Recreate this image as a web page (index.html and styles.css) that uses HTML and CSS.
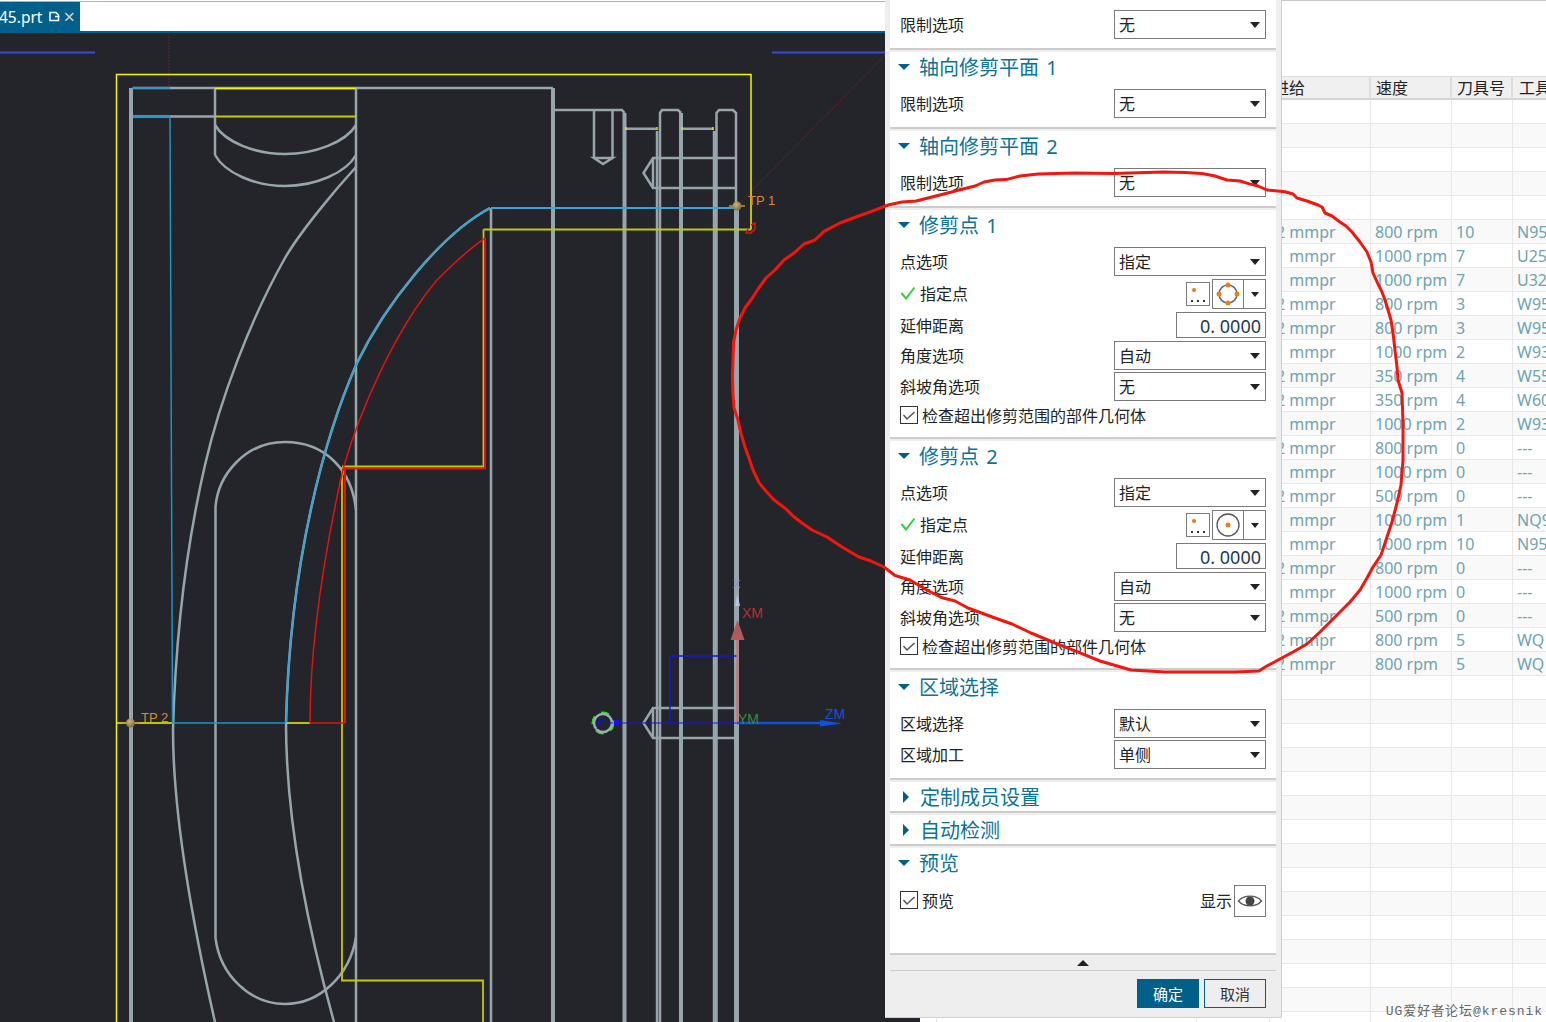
FILE: index.html
```html
<!DOCTYPE html>
<html lang="zh-CN">

<head>
    <meta charset="UTF-8">
    <title>修剪点</title>
    <link rel="stylesheet" href="styles.css">
</head>

<body>
    <div class="page">
        <div class="workspace">
            <div class="tabbar">
                <div class="tab">
                    <span class="tab-name">45.prt</span>
                    <svg class="tab-icon" width="11" height="11" viewBox="0 0 11 11">
                        <path d="M1 1.500H7L9.500 4V9.500H1Z M6 5.500H10.500" fill="none" stroke="#fff" stroke-width="1.500" />
                    </svg>
                    <span class="tab-close">×</span>
                </div>
            </div>
            <div class="canvas">
                <svg class="drawing" width="920" height="989" viewBox="0 33 920 989">
                    <defs>
                        <radialGradient id="ball" cx="40%" cy="35%" r="70%">
                            <stop offset="0" stop-color="#cdb87a" />
                            <stop offset="1" stop-color="#75663a" />
                        </radialGradient>
                    </defs>

                    <!-- 顶部蓝线 / 虚线 -->
                    <path class="top-line" d="M0 52.500H95 M772 52.500H885" />
                    <path class="dash" d="M169 33V88 M737 206L885 55" />

                    <!-- 零件轮廓 -->
                    <g class="part">
                        <path d="M215 88V155 M356 88V1022 M491 208V1022" />
                        <path d="M131 116.500H215 M133 88H553" />
                        <path d="M215 125C225 142 255 154 285 154C315 154 346 142 356 125" />
                        <path d="M215 155C225 173 255 186 285 186C315 186 346 173 356 155" />
                        <path d="M356 167C335 190 300 232 285 258C250 320 220 400 205 465C190 530 176 620 173 730C173 800 185 890 215 1022" />
                        <path d="M215.500 938V507C218 475 245 442 285 442C325 442 352 470 356 510" />
                        <path d="M215.500 938C220 975 250 1004 285 1004C320 1004 350 975 356 937" />
                        <path d="M490 208C440 235 385 305 357 363C325 435 290 560 286 723C286 800 300 900 334 1022" />
                        <path d="M553 110H622L624.500 113 M657 131V1022 M660 1022V113L662 110H678L681 113 M714 131V1022 M716.500 1022V113L719 110H733L736 113V206" />
                        <path d="M626 128.700H656 M683 128.700H713" />
                        <path d="M594 110V158 M612.500 110V158 M594 158H612.500L603 164Z" />
                        <path d="M736 158H653L643.500 173L653 188H736 M653 158V188" />
                        <path d="M736 708H653L643.500 723L653 738H736 M653 708V738" />
                    </g>
                    <path class="thick" d="M131 88V1022 M553 88V1022 M624.500 113V1022 M681 113V1022" />
                    <path class="thick-end" d="M736.500 206V1022" />

                    <!-- 黄色边界 -->
                    <g class="boundary">
                        <path d="M116.500 1022V74.500H751V229.500" />
                        <path d="M215 88.500H356" />
                        <path class="olive" d="M215 116.500H356 M483.500 229.500H751 M483.500 229.500V466.500H342 M342 467V980.500H483V1022" />
                        <path d="M116.500 723H173 M286 723H310" />
                        <path class="tick" d="M626 127V130 M657 127V130 M682 127V130 M713 127V130" />
                    </g>

                    <!-- 蓝色刀轨 -->
                    <g class="toolpath">
                        <path d="M132 88H170 M133 116.500H170 M170 117L172.500 723H286" />
                        <path class="toolpath-wide" d="M491 208H737" />
                        <path class="toolpath-wide" d="M490 208C440 235 385 305 357 363C325 435 290 560 286 723" />
                    </g>

                    <!-- 红色边界 -->
                    <g class="limit">
                        <path d="M310 723C310 640 325 550 343 469C360 410 395 330 437 280C455 262 470 248 485.500 238" />
                        <path d="M310 723H345" />
                        <path class="limit-wide" d="M345 723V468.500H485V238" />
                        <path d="M751 225L755 223V229L751 233H746L748 229" />
                    </g>

                    <!-- 修剪点 -->
                    <path class="pin-arm" d="M729 206H745 M122 723H139" />
                    <circle cx="737" cy="206" r="4.500" fill="url(#ball)" />
                    <circle cx="130.500" cy="723" r="4.500" fill="url(#ball)" />
                    <text class="pin-label" x="748" y="205">TP 1</text>
                    <text class="pin-label" x="141" y="722">TP 2</text>

                    <!-- 坐标系 -->
                    <path class="axis-rect" d="M670 723V656H737" />
                    <path class="axis-thin" d="M611 723H737" />
                    <path class="axis-x" d="M737.500 640V723" />
                    <polygon class="axis-x-head" points="737.500,620 730.500,640 744.500,640" />
                    <polygon class="axis-small" points="737.500,594 735,606 740,606" />
                    <path class="axis-z" d="M737 723H820" />
                    <polygon class="axis-z-head" points="820,720 842,723.500 820,726.500" />
                    <text class="axis-mark" x="733" y="588">X</text>
                    <text class="label-xm" x="742" y="618">XM</text>
                    <text class="label-ym" x="738" y="724">YM</text>
                    <text class="label-zm" x="825" y="719">ZM</text>

                    <circle class="origin-green" cx="603" cy="723" r="10" />
                    <circle class="origin-ring" cx="603" cy="723" r="9" />
                    <path class="origin-y" d="M598 719L599 724L597 729 M603 720L599 724 M607 723H613" />
                    <rect class="origin-box" x="614" y="720" width="5" height="6" />
                </svg>
            </div>
        </div>

        <div class="sheet">
            <table class="op-table">
                <colgroup>
                    <col class="c1"><col class="c2"><col class="c3"><col class="c4"><col class="c5"><col class="c6">
                </colgroup>
                <thead>
                    <tr><th></th><th></th><th></th><th class="feed-head">进给</th><th>速度</th><th>刀具号</th><th>工具</th></tr>
                </thead>
                <tbody>
                    <tr><td></td><td></td><td></td><td></td><td></td><td></td><td></td></tr>
                    <tr><td></td><td></td><td></td><td></td><td></td><td></td><td></td></tr>
                    <tr><td></td><td></td><td></td><td></td><td></td><td></td><td></td></tr>
                    <tr><td></td><td></td><td></td><td></td><td></td><td></td><td></td></tr>
                    <tr><td></td><td></td><td></td><td></td><td></td><td></td><td></td></tr>
                    <tr><td></td><td></td><td></td><td>2 mmpr</td><td>800 rpm</td><td>10</td><td>N95</td></tr>
                    <tr><td></td><td></td><td></td><td>1 mmpr</td><td>1000 rpm</td><td>7</td><td>U25</td></tr>
                    <tr><td></td><td></td><td></td><td>1 mmpr</td><td>1000 rpm</td><td>7</td><td>U32</td></tr>
                    <tr><td></td><td></td><td></td><td>2 mmpr</td><td>800 rpm</td><td>3</td><td>W95</td></tr>
                    <tr><td></td><td></td><td></td><td>2 mmpr</td><td>800 rpm</td><td>3</td><td>W95</td></tr>
                    <tr><td></td><td></td><td></td><td>1 mmpr</td><td>1000 rpm</td><td>2</td><td>W93</td></tr>
                    <tr><td></td><td></td><td></td><td>2 mmpr</td><td>350 rpm</td><td>4</td><td>W55</td></tr>
                    <tr><td></td><td></td><td></td><td>2 mmpr</td><td>350 rpm</td><td>4</td><td>W60</td></tr>
                    <tr><td></td><td></td><td></td><td>1 mmpr</td><td>1000 rpm</td><td>2</td><td>W93</td></tr>
                    <tr><td></td><td></td><td></td><td>2 mmpr</td><td>800 rpm</td><td>0</td><td>---</td></tr>
                    <tr><td></td><td></td><td></td><td>1 mmpr</td><td>1000 rpm</td><td>0</td><td>---</td></tr>
                    <tr><td></td><td></td><td></td><td>2 mmpr</td><td>500 rpm</td><td>0</td><td>---</td></tr>
                    <tr><td></td><td></td><td></td><td>1 mmpr</td><td>1000 rpm</td><td>1</td><td>NQ9</td></tr>
                    <tr><td></td><td></td><td></td><td>1 mmpr</td><td>1000 rpm</td><td>10</td><td>N95</td></tr>
                    <tr><td></td><td></td><td></td><td>2 mmpr</td><td>800 rpm</td><td>0</td><td>---</td></tr>
                    <tr><td></td><td></td><td></td><td>1 mmpr</td><td>1000 rpm</td><td>0</td><td>---</td></tr>
                    <tr><td></td><td></td><td></td><td>2 mmpr</td><td>500 rpm</td><td>0</td><td>---</td></tr>
                    <tr><td></td><td></td><td></td><td>2 mmpr</td><td>800 rpm</td><td>5</td><td>WQ</td></tr>
                    <tr><td></td><td></td><td></td><td>2 mmpr</td><td>800 rpm</td><td>5</td><td>WQ</td></tr>
                    <tr><td></td><td></td><td></td><td></td><td></td><td></td><td></td></tr>
                    <tr><td></td><td></td><td></td><td></td><td></td><td></td><td></td></tr>
                    <tr><td></td><td></td><td></td><td></td><td></td><td></td><td></td></tr>
                    <tr><td></td><td></td><td></td><td></td><td></td><td></td><td></td></tr>
                    <tr><td></td><td></td><td></td><td></td><td></td><td></td><td></td></tr>
                    <tr><td></td><td></td><td></td><td></td><td></td><td></td><td></td></tr>
                    <tr><td></td><td></td><td></td><td></td><td></td><td></td><td></td></tr>
                    <tr><td></td><td></td><td></td><td></td><td></td><td></td><td></td></tr>
                    <tr><td></td><td></td><td></td><td></td><td></td><td></td><td></td></tr>
                    <tr><td></td><td></td><td></td><td></td><td></td><td></td><td></td></tr>
                    <tr><td></td><td></td><td></td><td></td><td></td><td></td><td></td></tr>
                    <tr><td></td><td></td><td></td><td></td><td></td><td></td><td></td></tr>
                    <tr><td></td><td></td><td></td><td></td><td></td><td></td><td></td></tr>
                    <tr><td></td><td></td><td></td><td></td><td></td><td></td><td></td></tr>
                    <tr><td></td><td></td><td></td><td></td><td></td><td></td><td></td></tr>
                </tbody>
            </table>
        </div>

        <!-- 对话框 -->
        <div class="dialog">
            <div class="section section-first">
                <div class="form-row">
                    <span>限制选项</span>
                    <div class="select">无<i class="arrow"></i></div>
                </div>
            </div>

            <div class="section">
                <div class="section-head"><i class="caret"></i><span class="section-title">轴向修剪平面 1</span></div>
                <div class="form-row">
                    <span>限制选项</span>
                    <div class="select">无<i class="arrow"></i></div>
                </div>
            </div>

            <div class="section">
                <div class="section-head"><i class="caret"></i><span class="section-title">轴向修剪平面 2</span></div>
                <div class="form-row">
                    <span>限制选项</span>
                    <div class="select">无<i class="arrow"></i></div>
                </div>
            </div>

            <div class="section section-trim">
                <div class="section-head"><i class="caret"></i><span class="section-title">修剪点 1</span></div>
                <div class="form-row">
                    <span>点选项</span>
                    <div class="select">指定<i class="arrow"></i></div>
                </div>
                <div class="form-row pick-row">
                    <span class="pick-label">
                        <svg width="16" height="14" viewBox="0 0 16 14"><path d="M1.500 7L6 12.500L14.500 1.500" fill="none" stroke="#2fd13f" stroke-width="2" /></svg>
                        指定点
                    </span>
                    <div class="pick-tools">
                        <div class="dots-btn">
                            <svg width="22" height="22" viewBox="0 0 22 22">
                                <circle cx="7" cy="7" r="2" fill="#e07b1a" />
                                <path d="M4 18H6 M10 18H12 M16 18H18" stroke="#333" stroke-width="2" />
                            </svg>
                        </div>
                        <div class="split-btn">
                            <div class="split-main">
                                <svg width="26" height="26" viewBox="0 0 26 26">
                                    <circle cx="13" cy="13" r="9" fill="none" stroke="#666" stroke-width="1.500" />
                                    <circle cx="13" cy="4" r="2.500" fill="#e8801f" />
                                    <circle cx="13" cy="22" r="2.500" fill="#e8801f" />
                                    <circle cx="4" cy="13" r="2.500" fill="#e8801f" />
                                    <circle cx="22" cy="13" r="2.500" fill="#e8801f" />
                                </svg>
                            </div>
                            <div class="split-drop"><i class="arrow arrow-small"></i></div>
                        </div>
                    </div>
                </div>
                <div class="form-row number-row">
                    <span>延伸距离</span>
                    <div class="number-input">0. 0000</div>
                </div>
                <div class="form-row">
                    <span>角度选项</span>
                    <div class="select">自动<i class="arrow"></i></div>
                </div>
                <div class="form-row">
                    <span>斜坡角选项</span>
                    <div class="select">无<i class="arrow"></i></div>
                </div>
                <div class="check-row">
                    <span class="checkbox">
                        <svg width="14" height="12" viewBox="0 0 14 12"><path d="M1.500 6L5 10L12.500 3" fill="none" stroke="#555" stroke-width="1.500" /></svg>
                    </span>
                    检查超出修剪范围的部件几何体
                </div>
            </div>

            <div class="section section-trim">
                <div class="section-head"><i class="caret"></i><span class="section-title">修剪点 2</span></div>
                <div class="form-row">
                    <span>点选项</span>
                    <div class="select">指定<i class="arrow"></i></div>
                </div>
                <div class="form-row pick-row">
                    <span class="pick-label">
                        <svg width="16" height="14" viewBox="0 0 16 14"><path d="M1.500 7L6 12.500L14.500 1.500" fill="none" stroke="#2fd13f" stroke-width="2" /></svg>
                        指定点
                    </span>
                    <div class="pick-tools">
                        <div class="dots-btn">
                            <svg width="22" height="22" viewBox="0 0 22 22">
                                <circle cx="7" cy="7" r="2" fill="#e07b1a" />
                                <path d="M4 18H6 M10 18H12 M16 18H18" stroke="#333" stroke-width="2" />
                            </svg>
                        </div>
                        <div class="split-btn">
                            <div class="split-main">
                                <svg width="26" height="26" viewBox="0 0 26 26">
                                    <circle cx="13" cy="13" r="11" fill="none" stroke="#555" stroke-width="1.300" />
                                    <circle cx="13" cy="13" r="2.500" fill="#e8801f" />
                                </svg>
                            </div>
                            <div class="split-drop"><i class="arrow arrow-small"></i></div>
                        </div>
                    </div>
                </div>
                <div class="form-row number-row">
                    <span>延伸距离</span>
                    <div class="number-input">0. 0000</div>
                </div>
                <div class="form-row">
                    <span>角度选项</span>
                    <div class="select">自动<i class="arrow"></i></div>
                </div>
                <div class="form-row">
                    <span>斜坡角选项</span>
                    <div class="select">无<i class="arrow"></i></div>
                </div>
                <div class="check-row">
                    <span class="checkbox">
                        <svg width="14" height="12" viewBox="0 0 14 12"><path d="M1.500 6L5 10L12.500 3" fill="none" stroke="#555" stroke-width="1.500" /></svg>
                    </span>
                    检查超出修剪范围的部件几何体
                </div>
            </div>

            <div class="section">
                <div class="section-head"><i class="caret"></i><span class="section-title">区域选择</span></div>
                <div class="form-row">
                    <span>区域选择</span>
                    <div class="select">默认<i class="arrow"></i></div>
                </div>
                <div class="form-row">
                    <span>区域加工</span>
                    <div class="select">单侧<i class="arrow"></i></div>
                </div>
            </div>

            <div class="section section-closed">
                <div class="section-head"><i class="caret caret-right"></i><span class="section-title">定制成员设置</span></div>
            </div>
            <div class="section section-closed">
                <div class="section-head"><i class="caret caret-right"></i><span class="section-title">自动检测</span></div>
            </div>

            <div class="section section-preview">
                <div class="section-head"><i class="caret"></i><span class="section-title">预览</span></div>
                <div class="preview-row">
                    <div class="check-row">
                        <span class="checkbox">
                            <svg width="14" height="12" viewBox="0 0 14 12"><path d="M1.500 6L5 10L12.500 3" fill="none" stroke="#555" stroke-width="1.500" /></svg>
                        </span>
                        预览
                    </div>
                    <div class="show-group">
                        <span class="show-label">显示</span>
                        <div class="eye-btn">
                            <svg width="26" height="18" viewBox="0 0 26 18">
                                <path d="M1.500 9C7 2.500 19 2.500 24.500 9C19 15.500 7 15.500 1.500 9Z" fill="none" stroke="#555" stroke-width="1.300" />
                                <circle cx="13" cy="9" r="4.500" fill="#444" />
                            </svg>
                        </div>
                    </div>
                </div>
            </div>

            <div class="expander"><i class="arrow-up"></i></div>
            <div class="dialog-foot">
                <button class="btn btn-ok">确定</button>
                <button class="btn btn-cancel">取消</button>
            </div>
        </div>

        <!-- 手绘红圈 -->
        <svg class="markup" width="1546" height="1022" viewBox="0 0 1546 1022">
            <polyline points="888,205 873.600,210.700 856,217 840,223 823.600,231.600 815,240 804,244 794,253 784,260 775,270 766,278 758,289 752,298.500 745,308 739.600,319 736,330 733.600,342.400 732.500,376 733,395 734,408 738,420 741,433.600 745,447 748.600,457 753,470 759,482.600 765,490 773.600,499.500 786,509 793,516 802,523 812,530 827,537 842,547 859,557 871,561 884,567 895,575.500 910,580 925,589 941.400,597.500 955,601 968,608 995,618 1012,624 1031,633 1055,643 1077,651.600 1100,661 1131,670 1165,672 1202,672 1235,672 1259,671 1265,667 1280,659 1293,652 1307,644 1320,632 1335,617 1350,602 1360,590 1367,578 1373,567 1381,555 1387,537 1392,522 1397,503 1401,485 1403,460 1403,425 1402,393 1398,380 1397,367 1395,350 1393,333 1391,320 1388,310 1385,300 1382,292 1378,284 1373,273 1371,262 1367,252 1360,242 1352,232 1346,226 1340,222 1332,216 1325,213 1322,207 1318,205 1307,201 1297,198 1293,194 1285,191.700 1267,190 1258,186 1248.600,183.600 1240,181 1227,180 1215,176 1202,173.500 1185,172.500 1163,172 1113,173.500 1075,173 1038,174 1020,176 1006,179.600 995,180 984,182 975,186 963,189 940,195 916,201 902,202 888,205" />
        </svg>

        <div class="watermark">UG爱好者论坛@kresnik</div>
    </div>
</body>

</html>
```

FILE: styles.css
```css
* {
    margin: 0;
    padding: 0;
    box-sizing: border-box;
}

body {
    font-family: 'Noto Sans', 'Noto Sans CJK SC', sans-serif;
    background-color: #fff;
    color: #222;
    overflow: hidden;
}

.page {
    position: relative;
    display: flex;
    width: 1546px;
    height: 1022px;
    overflow: hidden;
}

/* 左侧图形窗口 */
.workspace {
    display: flex;
    flex-direction: column;
    width: 920px;
    flex-shrink: 0;
}

.tabbar {
    height: 32px;
    margin-top: 1px;
    background-color: #fff;
    border-top: 1px solid #b0b0b0;
    border-bottom: 2px solid #00608a;
}

.tab {
    display: flex;
    align-items: center;
    width: 80px;
    height: 29px;
    background-color: #00608a;
    color: #fff;
    overflow: hidden;
}

.tab-name {
    margin-left: -1px;
    font-size: 15.500px;
}

.tab-icon {
    margin-left: 7px;
}

.tab-close {
    margin-left: 3px;
    color: #d0d0d0;
    font-size: 20px;
    line-height: 1;
}

.canvas {
    flex: 1;
    background-color: #23252a;
    overflow: hidden;
}

.drawing {
    display: block;
}

.drawing path {
    fill: none;
}

.top-line {
    stroke: #3a4bdc;
    stroke-width: 2;
}

.dash {
    stroke: #6e2029;
    stroke-width: 1;
    stroke-dasharray: 2 1;
}

.part path {
    stroke: #96a6ac;
    stroke-width: 2.500;
}

.thick {
    stroke: #96a6ac;
    stroke-width: 4;
}

.thick-end {
    stroke: #96a6ac;
    stroke-width: 5;
}

.boundary path {
    stroke: #f5f500;
    stroke-width: 1.500;
}

.boundary .olive {
    stroke: #c8c800;
    stroke-width: 1.800;
}

.boundary .tick {
    stroke: #e8e800;
    stroke-width: 1.500;
}

.toolpath path {
    stroke: #1f93c6;
    stroke-width: 1.500;
}

.toolpath .toolpath-wide {
    stroke: #3fa3cf;
    stroke-width: 2;
}

.limit path {
    stroke: #e31212;
    stroke-width: 1.500;
}

.limit .limit-wide {
    stroke: #d81818;
    stroke-width: 2;
}

.pin-arm {
    stroke: #d98a3d;
    stroke-width: 1.500;
}

.pin-label {
    font-family: 'Liberation Sans', sans-serif;
    font-size: 13px;
    fill: #d98a3d;
}

.axis-rect {
    stroke: #1414e0;
    stroke-width: 1.500;
}

.axis-thin {
    stroke: #1414e0;
    stroke-width: 1;
}

.axis-x {
    stroke: #d86a6a;
    stroke-width: 2;
}

.axis-x-head {
    fill: #b25a5a;
}

.axis-small {
    fill: #b9c0e8;
}

.axis-z {
    stroke: #1050e0;
    stroke-width: 2.500;
}

.axis-z-head {
    fill: #1050e0;
}

.axis-mark,
.label-xm,
.label-ym,
.label-zm {
    font-family: 'Liberation Sans', sans-serif;
    font-size: 14px;
}

.axis-mark {
    font-size: 11px;
    fill: #8d92c8;
}

.label-xm {
    fill: #b83030;
}

.label-ym {
    fill: #2f8f3f;
}

.label-zm {
    fill: #1a50e0;
}

.drawing .origin-ring {
    fill: none;
    stroke: #a0acb0;
    stroke-width: 2.500;
}

.drawing .origin-green {
    fill: none;
    stroke: #22e022;
    stroke-width: 3;
    stroke-dasharray: 8 7;
}

.origin-y {
    stroke: #1414e0;
    stroke-width: 1;
}

.origin-box {
    fill: #1414e0;
}

/* 右侧工序表 */
.sheet {
    flex: 1;
    padding-top: 76px;
    overflow: hidden;
    border-top: 1px solid #c8c8c8;
}

.op-table {
    table-layout: fixed;
    border-collapse: separate;
    border-spacing: 0;
    width: 653px;
    margin-top: -1px;
    font-size: 16px;
}

.c1 { width: 17px; }
.c2 { width: 260px; }
.c3 { width: 73px; }
.c4 { width: 101px; }
.c5 { width: 81px; }
.c6 { width: 61px; }

.op-table th {
    height: 24px;
    padding-left: 5px;
    background-color: #f0f0f0;
    border-top: 1px solid #ddd;
    border-right: 2px solid #ddd;
    border-bottom: 2px solid #d4d4d4;
    font-weight: normal;
    line-height: 20px;
    text-align: left;
    white-space: nowrap;
    overflow: hidden;
    color: #222;
}

.op-table th:last-child {
    padding-left: 6px;
}

.op-table .feed-head {
    padding-left: 3px;
}

.op-table td {
    height: 24px;
    padding-left: 4px;
    border-right: 1px solid #e8e8e8;
    border-bottom: 1px solid #e8e8e8;
    color: #6fa3b0;
    white-space: nowrap;
    overflow: hidden;
    line-height: 22px;
}

.op-table td:nth-child(4) {
    padding-left: 6px;
}

.op-table tbody tr:nth-child(even) td {
    background-color: #f9f9f9;
}

/* 对话框 */
.dialog {
    position: absolute;
    left: 885px;
    top: 0;
    width: 397px;
    height: 1018px;
    padding: 0 5px;
    background-color: #eeeeee;
    border-right: 1px solid #cfcfcf;
    border-bottom: 1px solid #cfcfcf;
    font-size: 16px;
}

.section {
    display: flex;
    flex-direction: column;
    gap: 2px;
    width: 366px;
    padding: 0 10px 9px;
    margin-bottom: 2px;
    background-color: #fff;
    border-bottom: 2px solid #cccccc;
    box-sizing: content-box;
}

.section-first {
    padding-top: 10px;
}

.section-trim {
    padding-bottom: 8px;
}

.section-closed {
    padding-bottom: 0;
}

.section-closed .section-head {
    height: 29px;
    margin-bottom: 0;
}

.section-preview {
    height: 69px;
    padding-bottom: 36px;
    margin-bottom: 0;
}

.section-head {
    display: flex;
    align-items: center;
    height: 30px;
    margin-bottom: 5px;
}

.caret {
    width: 0;
    height: 0;
    margin-left: -2px;
    margin-right: 9px;
    border-left: 6.500px solid transparent;
    border-right: 6.500px solid transparent;
    border-top: 6px solid #00608a;
}

.caret-right {
    margin-left: 3px;
    margin-right: 11px;
    border-top: 6px solid transparent;
    border-bottom: 6px solid transparent;
    border-left: 6px solid #00608a;
    border-right: 0;
}

.section-title {
    margin-top: -2px;
    font-size: 20px;
    word-spacing: 2px;
    color: #0b7396;
    white-space: nowrap;
}

.section-closed .section-title {
    margin-top: 0;
}

.form-row {
    display: flex;
    align-items: center;
    justify-content: space-between;
    height: 29px;
}

.form-row > span {
    margin-top: -2px;
}

.select {
    position: relative;
    width: 152px;
    height: 29px;
    padding-left: 4px;
    background-color: #fff;
    border: 1px solid #7a7a7a;
    line-height: 28px;
}

.arrow {
    position: absolute;
    right: 5px;
    top: 11px;
    width: 0;
    height: 0;
    border-left: 5.500px solid transparent;
    border-right: 5.500px solid transparent;
    border-top: 6px solid #222;
}

.arrow-small {
    position: static;
    border-left-width: 4.500px;
    border-right-width: 4.500px;
    border-top-width: 5px;
}

.pick-row {
    height: 32px;
}

.pick-label {
    display: flex;
    align-items: center;
    gap: 4px;
}

.pick-tools {
    display: flex;
    align-items: center;
    gap: 2px;
}

.dots-btn {
    display: flex;
    align-items: center;
    justify-content: center;
    width: 24px;
    height: 24px;
    border: 1px solid #7a7a7a;
}

.split-btn {
    display: flex;
    width: 54px;
    height: 30px;
    border: 1px solid #7a7a7a;
}

.split-main {
    display: flex;
    align-items: center;
    justify-content: center;
    width: 31px;
    border-right: 1px solid #7a7a7a;
}

.split-drop {
    display: flex;
    align-items: center;
    justify-content: center;
    flex: 1;
}

.number-row {
    height: 27px;
    align-items: flex-start;
}

.number-row > span {
    margin-top: 0;
    line-height: 29px;
}

.number-input {
    width: 90px;
    height: 26px;
    padding-right: 4px;
    border: 1px solid #7a7a7a;
    font-size: 18px;
    line-height: 27px;
    text-align: right;
    color: #1d3a52;
}

.check-row {
    display: flex;
    align-items: center;
    gap: 4px;
    height: 26px;
    padding-bottom: 3px;
    white-space: nowrap;
}

.checkbox {
    display: flex;
    align-items: center;
    justify-content: center;
    width: 18px;
    height: 18px;
    border: 1px solid #333;
    background-color: #fff;
}

.preview-row {
    display: flex;
    align-items: center;
    justify-content: space-between;
    height: 32px;
}

.show-group {
    display: flex;
    align-items: center;
    gap: 2px;
}

.show-label {
    margin-top: -2px;
}

.eye-btn {
    display: flex;
    align-items: center;
    justify-content: center;
    width: 32px;
    height: 32px;
    border: 1px solid #7a7a7a;
}

.expander {
    display: flex;
    align-items: center;
    justify-content: center;
    width: 386px;
    height: 16px;
    border-bottom: 1px solid #cccccc;
}

.arrow-up {
    width: 0;
    height: 0;
    border-left: 6px solid transparent;
    border-right: 6px solid transparent;
    border-bottom: 6px solid #222;
}

.dialog-foot {
    display: flex;
    justify-content: flex-end;
    gap: 5px;
    width: 376px;
    padding-top: 8px;
}

.btn {
    width: 62px;
    height: 29px;
    font-family: inherit;
    font-size: 15px;
    border: 1px solid #00608a;
}

.btn-ok {
    background-color: #00608a;
    color: #fff;
}

.btn-cancel {
    background-color: #eeeeee;
    color: #333;
}

.markup {
    position: absolute;
    left: 0;
    top: 0;
    pointer-events: none;
}

.markup polyline {
    fill: none;
    stroke: #f2160c;
    stroke-width: 3;
    stroke-linejoin: round;
}

.watermark {
    position: absolute;
    right: 3px;
    bottom: 3px;
    font-family: 'Liberation Mono', 'Noto Sans CJK SC', monospace;
    font-size: 13px;
    letter-spacing: 0.950px;
    color: #666;
    white-space: nowrap;
}
```
